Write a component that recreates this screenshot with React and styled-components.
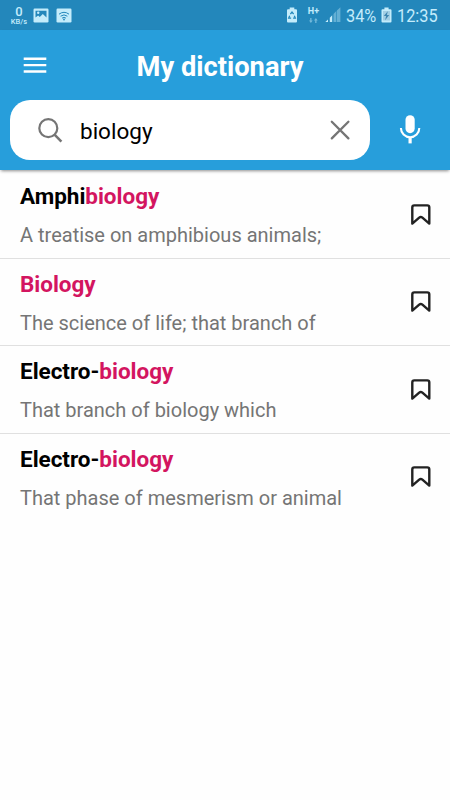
import React, { useState } from "react";
import styled, { createGlobalStyle } from "styled-components";

// Theme Palette
const theme = {
  primary: "#279edb",
  statusBar: "#2387bb",
  statusIcon: "#c4ecfb",
  accent: "#d31560",
  text: "#000000",
  textMuted: "#757575",
  icon: "#757575",
  divider: "#e0e0e0"
};

const GlobalStyle = createGlobalStyle`
  * { box-sizing: border-box; }
  body {
    margin: 0;
    background: #fefefe;
    font-family: Roboto, "Liberation Sans", sans-serif;
  }
`;

// Styled Components
const Screen = styled.div`
  width: 450px;
  height: 800px;
  overflow: hidden;
  display: flex;
  flex-direction: column;
  background: #fefefe;
`;

const StatusBar = styled.div`
  height: 30px;
  flex: none;
  padding: 0 12px 0 9px;
  display: flex;
  align-items: center;
  justify-content: space-between;
  background: ${theme.statusBar};
  color: ${theme.statusIcon};

  svg { display: block; }
`;

const StatusGroup = styled.div`
  height: 30px;
  display: flex;
  align-items: center;
`;

const NetSpeed = styled.div`
  width: 20px;
  margin-right: 4px;
  padding-top: 1px;
  display: flex;
  flex-direction: column;
  align-items: center;
  white-space: nowrap;
`;

const SpeedValue = styled.span`
  font-size: 13px;
  line-height: 12px;
  font-weight: 500;
`;

const SpeedUnit = styled.span`
  font-size: 7.5px;
  line-height: 8px;
  font-weight: 500;
`;

const StatusIcon = styled.svg`
  margin-right: ${(props) => props.$gap || 0}px;
`;

const NetworkType = styled.div`
  width: 13px;
  margin-right: 5px;
  display: flex;
  flex-direction: column;
  align-items: center;
  gap: 2px;
  font-size: 9px;
  line-height: 9px;
  font-weight: 700;
`;

const StatusText = styled.span`
  width: ${(props) => props.$width}px;
  margin-right: ${(props) => props.$gap || 0}px;
  padding-top: 2px;
  font-size: 19px;
  line-height: 22px;
  white-space: nowrap;
`;

// Narrow status bar digits
const Narrow = styled.span`
  display: inline-block;
  transform: scaleX(0.86);
  transform-origin: left center;
`;

const Header = styled.header`
  height: 140px;
  flex: none;
  background: ${theme.primary};
  box-shadow: 0 2px 3px -1px rgba(0, 0, 0, 0.45);
`;

const TitleBar = styled.div`
  height: 70px;
  padding: 0 30px 0 20px;
  display: grid;
  grid-template-columns: 30px 1fr 30px;
  align-items: center;
`;

const Title = styled.h1`
  margin: 0;
  padding: 3px 0 0 0;
  color: #ffffff;
  font-size: 27.3px;
  line-height: 32px;
  font-weight: 700;
  text-align: center;
  white-space: nowrap;
`;

const IconButton = styled.button`
  width: ${(props) => props.$size || 30}px;
  height: ${(props) => props.$size || 30}px;
  padding: 0;
  border: none;
  background: none;
  display: flex;
  align-items: center;
  justify-content: center;
  cursor: pointer;
`;

const SearchRow = styled.div`
  padding: 0 20px 0 10px;
  display: flex;
  align-items: center;
  justify-content: space-between;
`;

const SearchBox = styled.div`
  width: 360px;
  height: 60px;
  padding: 0 15px 0 25px;
  border-radius: 20px;
  background: #ffffff;
  display: flex;
  align-items: center;
`;

const SearchInput = styled.input`
  flex: 1;
  min-width: 0;
  margin: 1px 10px 0 15px;
  padding: 0;
  border: none;
  outline: none;
  background: none;
  color: ${theme.text};
  font-family: inherit;
  font-size: 22.5px;
  line-height: 28px;
`;

const WordList = styled.ul`
  margin: 0;
  padding: 0;
  list-style: none;
`;

const WordRow = styled.li`
  height: 87.5px;
  padding: 0 14px 0 20px;
  display: flex;
  align-items: center;
  justify-content: space-between;

  & + & { box-shadow: inset 0 1px 0 ${theme.divider}; }
`;

const WordText = styled.div`
  height: 87.5px;
  padding-top: 12px;
`;

const Word = styled.div`
  color: ${theme.text};
  font-size: 22.5px;
  line-height: 28px;
  font-weight: 700;
  letter-spacing: -0.03px;
  white-space: nowrap;
`;

const Match = styled.span`
  color: ${theme.accent};
`;

const Meaning = styled.div`
  margin-top: 12px;
  color: ${theme.textMuted};
  font-size: 20px;
  line-height: 26px;
  white-space: nowrap;
`;

const words = [
  { id: 1, word: "Amphibiology", meaning: "A treatise on amphibious animals;" },
  { id: 2, word: "Biology", meaning: "The science of life; that branch of" },
  { id: 3, word: "Electro-biology", meaning: "That branch of biology which" },
  { id: 4, word: "Electro-biology", meaning: "That phase of mesmerism or animal" }
];

const Highlighted = ({ text, query }) => {
  const start = query ? text.toLowerCase().indexOf(query.toLowerCase()) : -1;
  if (start < 0) return text;
  const end = start + query.length;
  return (
    <>
      {text.slice(0, start)}
      <Match>{text.slice(start, end)}</Match>
      {text.slice(end)}
    </>
  );
};

const MenuIcon = () => (
  <svg width="24" height="24" viewBox="0 0 24 24" stroke="#fff" strokeWidth="2.4">
    <path d="M.7 5.7h22.6M.7 12.1h22.6M.7 18.5h22.6" />
  </svg>
);

const SearchIcon = () => (
  <svg width="30" height="30" viewBox="0 0 30 30" fill="none" stroke={theme.icon} strokeWidth="2.2">
    <circle cx="13.3" cy="13.2" r="9" />
    <path d="M19.8 19.8l6.6 6.8" strokeWidth="2.5" />
  </svg>
);

const CloseIcon = () => (
  <svg width="30" height="30" viewBox="0 0 30 30" stroke={theme.icon} strokeWidth="2.3" strokeLinecap="round">
    <path d="M6.8 6.8l16.6 16.6M23.4 6.8L6.8 23.4" />
  </svg>
);

const MicIcon = () => (
  <svg width="30" height="30" viewBox="0 0 30 30" fill="none" stroke="#fff">
    <rect x="10.5" y=".2" width="9.2" height="18" rx="4.6" fill="#fff" stroke="none" />
    <path d="M5.9 13.1a9.2 9.2 0 0 0 18.4 0" strokeWidth="2.1" />
    <path d="M15.1 22v6.4" strokeWidth="3.2" />
  </svg>
);

const BookmarkIcon = ({ filled }) => (
  <svg width="30" height="30" viewBox="0 0 30 30" fill={filled ? "#222" : "none"} stroke="#222" strokeWidth="2.4">
    <path d="M6.3 24.6V8.4a2 2 0 0 1 2-2h13a2 2 0 0 1 2 2v16.2l-6.9-6q-1.6-1.3-3.2 0z" strokeLinejoin="round" />
  </svg>
);

const App = () => {
  const [query, setQuery] = useState("biology");
  const [saved, setSaved] = useState({});

  const toggleSaved = (id) => {
    setSaved((prev) => ({ ...prev, [id]: !prev[id] }));
  };

  return (
    <>
      <GlobalStyle />
      <Screen>
        <StatusBar>
          <StatusGroup>
            <NetSpeed>
              <SpeedValue>0</SpeedValue>
              <SpeedUnit>KB/s</SpeedUnit>
            </NetSpeed>
            {/* Gallery */}
            <StatusIcon $gap={7} width="16" height="15" viewBox="0 0 16 15">
              <rect x=".5" y=".5" width="15" height="14" rx="1.2" fill={theme.statusIcon} />
              <path d="M2.5 2.8h11v6.8l-3.7-3.6-3 3.1-1.7-1.5-2.6 2z" fill={theme.statusBar} />
              <circle cx="5.2" cy="4.8" r="1.2" fill={theme.statusIcon} />
            </StatusIcon>
            {/* Wi-Fi */}
            <StatusIcon width="16" height="15" viewBox="0 0 16 15">
              <rect x=".5" y=".5" width="15" height="14" rx="1.2" fill={theme.statusIcon} />
              <g fill="none" stroke={theme.statusBar} strokeWidth="1">
                <path d="M3 6.2q5-3.8 10 0M4.6 8.2q3.4-2.6 6.8 0M6.1 10.1q1.9-1.4 3.8 0" />
              </g>
              <circle cx="8" cy="11.5" r=".9" fill={theme.statusBar} />
            </StatusIcon>
          </StatusGroup>

          <StatusGroup>
            {/* Battery saver */}
            <StatusIcon $gap={9} width="12" height="16" viewBox="0 0 12 16">
              <path d="M3.7.5h4.6v1.7h1.7q1 0 1 1v11.3q0 1-1 1H2q-1 0-1-1V3.2q0-1 1-1h1.7z" fill={theme.statusIcon} />
              <path d="M4.4 7.2L6 5l1.6 2.2M8.3 8.7l1 2.4H7.1M5.1 11.1H2.7l1-2.4" fill="none" stroke={theme.statusBar} strokeWidth="1.3" />
            </StatusIcon>
            <NetworkType>
              H+
              <svg width="9" height="5" viewBox="0 0 9 5" fill={theme.statusIcon} opacity=".5">
                <path d="M0 2.5h1.2V0h1.3v2.5h1.2L1.9 5zM5 2.5L6.9 0l1.8 2.5H7.5V5H6.2V2.5z" />
              </svg>
            </NetworkType>
            <StatusIcon $gap={5} width="16" height="16" viewBox="0 0 16 16" fill={theme.statusIcon}>
              <path d="M.3 15L3 12.6V15zM4.8 10.7l2.4-2.4V15H4.8z" />
              <path d="M8.5 6.9l2.8-2.8V15H8.5zM11.9 3.5L15.4.2V15h-3.5z" opacity=".4" />
            </StatusIcon>
            <StatusText $width={30} $gap={5}>
              <Narrow>34%</Narrow>
            </StatusText>
            {/* Battery */}
            <StatusIcon $gap={5} width="11" height="16" viewBox="0 0 11 16">
              <path d="M3.4.5h4.2v1.7h1.9q1 0 1 1v11.3q0 1-1 1h-8q-1 0-1-1V3.2q0-1 1-1h1.9z" fill={theme.statusIcon} />
              <path d="M2 4h7v9.5H2z" fill="#a3cfe4" />
              <path d="M6.8 4.3L2.8 9h2.3l-1 4.2L8.2 8H5.9z" fill="#3f86b0" />
            </StatusIcon>
            <StatusText $width={41}>
              <Narrow>12:35</Narrow>
            </StatusText>
          </StatusGroup>
        </StatusBar>

        <Header>
          <TitleBar>
            <IconButton aria-label="Menu"><MenuIcon /></IconButton>
            <Title>My dictionary</Title>
          </TitleBar>
          <SearchRow>
            <SearchBox>
              <SearchIcon />
              <SearchInput value={query} onChange={(e) => setQuery(e.target.value)} />
              <IconButton aria-label="Clear" onClick={() => setQuery("")}><CloseIcon /></IconButton>
            </SearchBox>
            <IconButton aria-label="Voice search" $size={40}><MicIcon /></IconButton>
          </SearchRow>
        </Header>

        <WordList>
          {words.map((item) => (
            <WordRow key={item.id}>
              <WordText>
                <Word><Highlighted text={item.word} query={query} /></Word>
                <Meaning>{item.meaning}</Meaning>
              </WordText>
              <IconButton aria-label="Bookmark" onClick={() => toggleSaved(item.id)}>
                <BookmarkIcon filled={saved[item.id]} />
              </IconButton>
            </WordRow>
          ))}
        </WordList>
      </Screen>
    </>
  );
};

export default App;
